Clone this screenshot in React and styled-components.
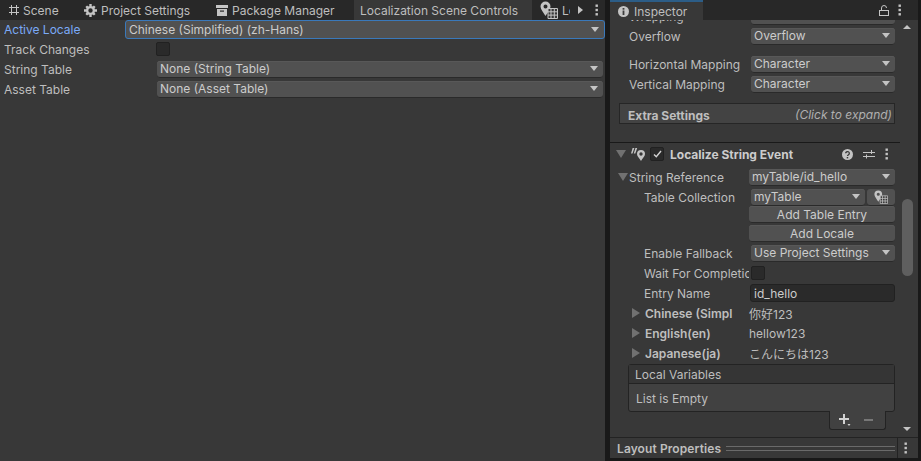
import React from "react";
import styled, { createGlobalStyle } from "styled-components";

const GlobalStyle = createGlobalStyle`
html, body {
  margin: 0;
  padding: 0;
  background: #191919;
}
body {
  font-family: Inter, "Liberation Sans", "Noto Sans CJK JP", sans-serif;
  font-size: 12px;
  color: #bebebe;
}
* { box-sizing: border-box; }
`

const Page = styled.div`
width: 921px;
height: 461px;
display: flex;
overflow: hidden;
background: #191919;
`
const LeftPane = styled.div`
width: 605px;
height: 461px;
display: flex;
flex-direction: column;
`
const TabBar = styled.div`
height: 20px;
flex: none;
display: flex;
align-items: stretch;
background: #282828;
position: relative;
overflow: hidden;
`
const Tab = styled.div`
display: flex;
align-items: center;
gap: ${p => p.$gap ?? 4}px;
width: ${p => p.$width}px;
flex: none;
padding-left: ${p => p.$pad ?? 8}px;
white-space: nowrap;
overflow: hidden;
font-size: 12px;
color: #bebebe;
background: ${p => p.$active ? "#383838" : "transparent"};
border-top: ${p => p.$focused ? "2px solid #2c5d87" : "none"};
`
const TabTools = styled.div`
position: absolute;
top: 0;
right: 0;
width: 35px;
height: 20px;
display: flex;
align-items: center;
padding-left: 8px;
gap: 12px;
background: #282828;
`
const PanelBody = styled.div`
flex: 1;
background: #383838;
padding: 0 2px 0 0;
`
const FieldRow = styled.div`
height: 20px;
display: flex;
align-items: center;
padding: 0 0 ${p => p.$focus ? 1 : 2}px 4px;
color: ${p => p.$focus ? "#7baaf7" : "#bebebe"};
`
const RowLabel = styled.div`
width: ${p => p.$width}px;
flex: none;
white-space: nowrap;
overflow: hidden;
font-weight: ${p => p.$bold ? 600 : 400};
`
const Select = styled.div`
flex: 1;
height: ${p => p.$height ?? 17}px;
display: flex;
align-items: center;
justify-content: space-between;
min-width: 0;
padding: 0 5px 1px ${p => p.$pad ?? 3}px;
background: #515151;
border-radius: 3px;
box-shadow: inset 0 -1px 0 #2a2a2a, inset 0 1px 0 #585858;
color: #cccccc;
white-space: nowrap;
`
const FocusSelect = styled(Select)`
border: 1px solid #3a79bb;
box-shadow: none;
height: 19px;
margin-right: -2px;
`
const Caret = styled.span`
width: 0;
height: 0;
flex: none;
border-left: 4px solid transparent;
border-right: 4px solid transparent;
border-top: 5px solid #c4c4c4;
`
const Checkbox = styled.div`
width: 14px;
height: 14px;
flex: none;
margin-left: ${p => p.$left ?? 0}px;
display: flex;
align-items: center;
justify-content: center;
background: #2a2a2a;
border: 1px solid #212121;
border-radius: 2px;
`
const Inspector = styled.div`
width: 308px;
margin-left: 5px;
height: 458px;
flex: none;
display: flex;
flex-direction: column;
background: #383838;
`
const InspectorTabs = styled(TabBar)`
justify-content: space-between;
`
const InspectorTools = styled.div`
display: flex;
align-items: center;
gap: 9px;
padding-right: 17px;
`
const InspectorMain = styled.div`
flex: 1;
min-height: 0;
display: flex;
overflow: hidden;
`
const Scroll = styled.div`
width: 290px;
flex: none;
overflow: hidden;
`
const ScrollInner = styled.div`
margin-top: -14px;
`
const Bar = styled.div`
flex: 1;
display: flex;
flex-direction: column;
align-items: center;
padding: 5px 4px 0 0;
position: relative;
`
const BarArrow = styled.span`
width: 0;
height: 0;
border-left: 4px solid transparent;
border-right: 4px solid transparent;
${p => p.$down ? "border-top: 4px solid #c4c4c4;" : "border-bottom: 4px solid #c4c4c4;"}
${p => p.$down ? "margin-top: auto; margin-bottom: 6px;" : ""}
`
const BarThumb = styled.div`
position: absolute;
top: 179px;
left: 2px;
width: 11px;
height: 77px;
border-radius: 6px;
background: #5f5f5f;
`
const TextRow = styled.div`
height: 20px;
display: flex;
align-items: center;
padding-left: ${p => p.$pad ?? 19}px;
padding-right: ${p => p.$right ?? 5}px;
margin-top: ${p => p.$top ?? 0}px;
`
const ExtraBox = styled.div`
margin: 9px 5px 0 9px;
height: 21px;
display: flex;
align-items: flex-end;
justify-content: space-between;
padding: 0 2px 0 8px;
background: #434343;
border: 1px solid #262626;
line-height: 14px;
`
const ExtraTitle = styled.span`
font-weight: 700;
color: #bebebe;
`
const ExtraHint = styled.span`
font-style: italic;
color: #b0b0b0;
margin-bottom: 1px;
`
const ComponentHeader = styled.div`
height: 25px;
margin-top: 18px;
display: flex;
align-items: center;
padding: 0 12px 2px 6px;
border-top: 1px solid #191919;
font-weight: 700;
color: #cccccc;
`
const HeaderTitle = styled.span`
margin-left: 6px;
flex: 1;
`
const FoldDown = styled.span`
width: 0;
height: 0;
flex: none;
margin-left: ${p => p.$left ?? 0}px;
margin-right: ${p => p.$right ?? 0}px;
border-left: 5px solid transparent;
border-right: 5px solid transparent;
border-top: 8px solid #717171;
`
const FoldRight = styled.span`
width: 0;
height: 0;
flex: none;
margin-left: 22px;
margin-right: 5px;
border-top: 5px solid transparent;
border-bottom: 5px solid transparent;
border-left: 8px solid #717171;
`
const HeaderIcons = styled.div`
display: flex;
align-items: center;
gap: 10px;
`
const Button = styled.div`
height: 17px;
margin: ${p => p.$top ?? 0}px 5px 0 139px;
display: flex;
align-items: center;
justify-content: center;
padding-bottom: 1px;
background: #515151;
border-radius: 3px;
box-shadow: inset 0 -1px 0 #2a2a2a, inset 0 1px 0 #585858;
color: #cccccc;
`
const IconButton = styled.div`
width: 28px;
height: 17px;
flex: none;
margin-left: 2px;
display: flex;
align-items: center;
justify-content: center;
background: #515151;
border-radius: 3px;
box-shadow: inset 0 -1px 0 #2a2a2a;
`
const TextInput = styled.div`
flex: 1;
height: 18px;
display: flex;
align-items: center;
padding-left: 3px;
background: #2a2a2a;
border: 1px solid #212121;
border-radius: 3px;
color: #cccccc;
`
const ValueText = styled.span`
margin-left: ${p => p.$left ?? 0}px;
color: #bebebe;
`
const ListBox = styled.div`
margin: 1px 5px 0 18px;
border: 1px solid #232323;
border-radius: 3px;
background: #414141;
`
const ListHead = styled.div`
height: 19px;
display: flex;
align-items: center;
padding-left: 6px;
background: #353535;
border-bottom: 1px solid #232323;
`
const ListBody = styled.div`
height: 27px;
display: flex;
align-items: center;
padding: 2px 0 0 7px;
`
const ListFooter = styled.div`
width: 57px;
height: 19px;
margin: -1px 0 0 219px;
position: relative;
display: flex;
align-items: center;
padding-left: 9px;
gap: 13px;
background: #414141;
border: 1px solid #232323;
border-top: none;
border-radius: 0 0 3px 3px;
`
const BottomBar = styled.div`
height: 21px;
flex: none;
display: flex;
align-items: center;
border-top: 1px solid #232323;
padding-left: 7px;
font-weight: 600;
color: #bebebe;
`
const BottomTitle = styled.span`
white-space: nowrap;
letter-spacing: 0.1px;
`
const Grip = styled.span`
flex: 1;
height: 5px;
margin: 0 2px 0 5px;
border-top: 1px solid #6a6a6a;
border-bottom: 1px solid #6a6a6a;
`
const BottomMenu = styled.div`
width: 21px;
height: 100%;
padding-right: 5px;
flex: none;
display: flex;
align-items: center;
justify-content: center;
border-left: 1px solid #232323;
`

const Dots = () => (
    <svg width="3" height="12" viewBox="0 0 3 12">
        <rect x="0.5" y="0.5" width="2.4" height="2.4" fill="#c4c4c4"/>
        <rect x="0.5" y="4.8" width="2.4" height="2.4" fill="#c4c4c4"/>
        <rect x="0.5" y="9.1" width="2.4" height="2.4" fill="#c4c4c4"/>
    </svg>
)
const GridIcon = () => (
    <svg width="12" height="12" viewBox="0 0 12 12" fill="none" stroke="#c4c4c4" strokeWidth="1">
        <path d="M3.5 1v10M8.5 1v10M1 3.5h10M1 8.5h10"/>
    </svg>
)
const GearIcon = () => (
    <svg width="13" height="13" viewBox="0 0 13 13">
        <circle cx="6.5" cy="6.5" r="3.4" fill="none" stroke="#c4c4c4" strokeWidth="2.4"/>
        <path d="M5.3 0h2.4v2.4H5.3zM5.3 10.6h2.4V13H5.3zM0 5.3h2.4v2.4H0zM10.6 5.3H13v2.4h-2.4zM1.4 3.1L3.1 1.4l1.6 1.6-1.7 1.7zM8.3 10l1.7-1.7 1.6 1.6-1.7 1.7zM9.900 1.400l1.700 1.700L10 4.700 8.300 3zM3 8.300L4.700 10l-1.600 1.600-1.700-1.700z" fill="#c4c4c4"/>
    </svg>
)
const BoxIcon = () => (
    <svg width="12" height="11" viewBox="0 0 12 11">
        <path d="M0 0h12v3H0zM1 4h10v7H1z" fill="#c4c4c4"/>
        <rect x="4" y="5.500" width="4" height="1.200" fill="#282828"/>
    </svg>
)
const PinGridIcon = ({size = 18}) => (
    <svg width={size} height={size} viewBox="0 0 18 18">
        <path fillRule="evenodd" d="M5.500 0.500a5 5 0 0 1 5 5c0 3-3 6-5 9.500-2-3.500-5-6.500-5-9.500a5 5 0 0 1 5-5zm0 3a2 2 0 1 0 0 4 2 2 0 0 0 0-4z" fill="#c4c4c4"/>
        <path d="M8 7.500h9.500v10H8zM11 7.500v10M14.300 7.500v10M8 10.800h9.500M8 14.100h9.500" fill="#383838" stroke="#c4c4c4" strokeWidth="1"/>
    </svg>
)
const InfoIcon = () => (
    <svg width="11" height="11" viewBox="0 0 11 11">
        <circle cx="5.500" cy="5.500" r="5.500" fill="#c4c4c4"/>
        <rect x="4.600" y="2" width="1.800" height="1.700" fill="#3c3c3c"/>
        <rect x="4.600" y="4.500" width="1.800" height="4.500" fill="#3c3c3c"/>
    </svg>
)
const LockIcon = () => (
    <svg width="10" height="11" viewBox="0 0 10 11" fill="none" stroke="#c4c4c4" strokeWidth="1">
        <rect x="0.500" y="5.500" width="9" height="5"/>
        <path d="M2.500 5.500V3a2.500 2.500 0 0 1 5 0"/>
    </svg>
)
const PlayIcon = () => (
    <svg width="5" height="8" viewBox="0 0 5 8"><path d="M0 0l5 4-5 4z" fill="#c4c4c4"/></svg>
)
const CheckIcon = () => (
    <svg width="9" height="8" viewBox="0 0 9 8" fill="none" stroke="#d2d2d2" strokeWidth="1.400">
        <path d="M1 4.500l2.300 2.300L8 1"/>
    </svg>
)
const LocalizeIcon = () => (
    <svg width="14" height="13" viewBox="0 0 14 13" style={{marginLeft: 5, marginRight: 5}}>
        <path d="M1.600 0L0 5.500h1.500L3.400 0zM4.400 0L2.800 5.500h1.500L6.200 0z" fill="#c4c4c4"/>
        <path fillRule="evenodd" d="M10 2a4 4 0 0 1 4 4c0 2.200-2.400 4.300-4 7-1.600-2.700-4-4.800-4-7a4 4 0 0 1 4-4zm0 2.300a1.700 1.700 0 1 0 0 3.400 1.700 1.700 0 0 0 0-3.400z" fill="#c4c4c4"/>
    </svg>
)
const HelpIcon = () => (
    <svg width="11" height="11" viewBox="0 0 11 11">
        <circle cx="5.500" cy="5.500" r="5.500" fill="#c4c4c4"/>
        <path d="M3.700 4.300a1.800 1.700 0 1 1 2.800 1.400c-.7.500-1 .8-1 1.400" fill="none" stroke="#383838" strokeWidth="1.300"/>
        <rect x="4.700" y="8" width="1.500" height="1.400" fill="#383838"/>
    </svg>
)
const SlidersIcon = () => (
    <svg width="12" height="11" viewBox="0 0 12 11" fill="none" stroke="#c4c4c4" strokeWidth="1">
        <path d="M0 3.500h12M0 7.500h12M8.500 1v4M3.500 5.500v4"/>
    </svg>
)
const PlusIcon = () => (
    <svg width="12" height="12" viewBox="0 0 12 12">
        <path d="M4 0h2v4h4v2H6v4H4V6H0V4h4z" fill="#d2d2d2"/>
        <path d="M8.500 10h3l-1.500 2z" fill="#d2d2d2"/>
    </svg>
)
const MinusIcon = () => (
    <svg width="9" height="2" viewBox="0 0 9 2"><rect width="9" height="2" fill="#777777"/></svg>
)

const LabelledSelect = ({label, value}) => (
    <TextRow>
        <RowLabel $width={122}>{label}</RowLabel>
        <Select>{value}<Caret/></Select>
    </TextRow>
)

const Entry = ({name, value}) => (
    <TextRow $pad={0}>
        <FoldRight/>
        <RowLabel $width={88} $bold>{name}</RowLabel>
        <ValueText $left={16}>{value}</ValueText>
    </TextRow>
)

export default function App() {
    return (
        <Page>
            <GlobalStyle/>
            <LeftPane>
                <TabBar>
                    <Tab $width={76} $gap={3}><GridIcon/>Scene</Tab>
                    <Tab $width={132}><GearIcon/>Project Settings</Tab>
                    <Tab $width={146}><BoxIcon/>Package Manager</Tab>
                    <Tab $width={178} $active $pad={6}>Localization Scene Controls</Tab>
                    <Tab $width={45} $gap={4}><PinGridIcon/>Lo</Tab>
                    <TabTools><PlayIcon/><Dots/></TabTools>
                </TabBar>
                <PanelBody>
                    <FieldRow $focus>
                        <RowLabel $width={121}>Active Locale</RowLabel>
                        <FocusSelect>Chinese (Simplified) (zh-Hans)<Caret/></FocusSelect>
                    </FieldRow>
                    <FieldRow>
                        <RowLabel $width={152}>Track Changes</RowLabel>
                        <Checkbox/>
                    </FieldRow>
                    <FieldRow>
                        <RowLabel $width={153}>String Table</RowLabel>
                        <Select>None (String Table)<Caret/></Select>
                    </FieldRow>
                    <FieldRow>
                        <RowLabel $width={153}>Asset Table</RowLabel>
                        <Select>None (Asset Table)<Caret/></Select>
                    </FieldRow>
                </PanelBody>
            </LeftPane>
            <Inspector>
                <InspectorTabs>
                    <Tab $width={93} $active $focused $gap={5}><InfoIcon/>Inspector</Tab>
                    <InspectorTools><LockIcon/><Dots/></InspectorTools>
                </InspectorTabs>
                <InspectorMain>
                    <Scroll>
                        <ScrollInner>
                            <LabelledSelect label="Wrapping" value="Enabled"/>
                            <LabelledSelect label="Overflow" value="Overflow"/>
                            <TextRow $top={8}>
                                <RowLabel $width={122}>Horizontal Mapping</RowLabel>
                                <Select>Character<Caret/></Select>
                            </TextRow>
                            <LabelledSelect label="Vertical Mapping" value="Character"/>
                            <ExtraBox>
                                <ExtraTitle>Extra Settings</ExtraTitle>
                                <ExtraHint>(Click to expand)</ExtraHint>
                            </ExtraBox>
                            <ComponentHeader>
                                <FoldDown/>
                                <LocalizeIcon/>
                                <Checkbox><CheckIcon/></Checkbox>
                                <HeaderTitle>Localize String Event</HeaderTitle>
                                <HeaderIcons><HelpIcon/><SlidersIcon/><Dots/></HeaderIcons>
                            </ComponentHeader>
                            <TextRow $pad={8}>
                                <FoldDown $right={1}/>
                                <RowLabel $width={120}>String Reference</RowLabel>
                                <Select>myTable/id_hello<Caret/></Select>
                            </TextRow>
                            <TextRow $pad={34}>
                                <RowLabel $width={107}>Table Collection</RowLabel>
                                <Select>myTable<Caret/></Select>
                                <IconButton><PinGridIcon size={14}/></IconButton>
                            </TextRow>
                            <Button $top={-1}>Add Table Entry</Button>
                            <Button $top={2}>Add Locale</Button>
                            <TextRow $pad={34} $top={1}>
                                <RowLabel $width={107}>Enable Fallback</RowLabel>
                                <Select>Use Project Settings<Caret/></Select>
                            </TextRow>
                            <TextRow $pad={34}>
                                <RowLabel $width={105}>Wait For Completion</RowLabel>
                                <Checkbox $left={2}/>
                            </TextRow>
                            <TextRow $pad={34}>
                                <RowLabel $width={106}>Entry Name</RowLabel>
                                <TextInput>id_hello</TextInput>
                            </TextRow>
                            <Entry name="Chinese (Simpl" value="你好123"/>
                            <Entry name="English(en)" value="hellow123"/>
                            <Entry name="Japanese(ja)" value="こんにちは123"/>
                            <ListBox>
                                <ListHead>Local Variables</ListHead>
                                <ListBody>List is Empty</ListBody>
                            </ListBox>
                            <ListFooter><PlusIcon/><MinusIcon/></ListFooter>
                        </ScrollInner>
                    </Scroll>
                    <Bar>
                        <BarArrow/>
                        <BarThumb/>
                        <BarArrow $down/>
                    </Bar>
                </InspectorMain>
                <BottomBar>
                    <BottomTitle>Layout Properties</BottomTitle>
                    <Grip/>
                    <BottomMenu><Dots/></BottomMenu>
                </BottomBar>
            </Inspector>
        </Page>
    )
}
